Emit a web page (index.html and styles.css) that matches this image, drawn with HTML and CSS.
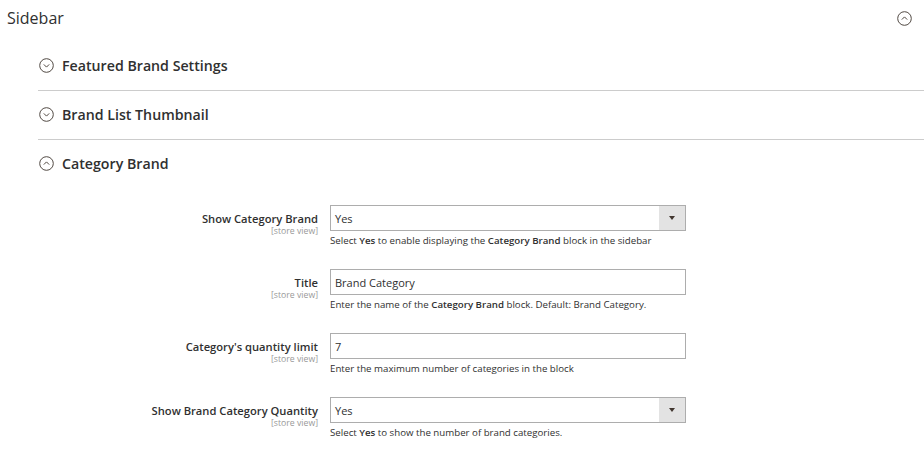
FILE: index.html
```html
<!DOCTYPE html>
<html>
<head>
<meta charset="utf-8">
<link rel="stylesheet" href="styles.css">
</head>
<body>
<div class="page">
  <div class="main-head">
    <span class="main-title">Sidebar</span>
    <svg class="ico ico-main" width="15" height="15" viewBox="0 0 15 15"><circle cx="7.5" cy="7.5" r="6.8" fill="none" stroke="#514943" stroke-width="1"/><path d="M4.8 8.6 L7.5 5.9 L10.2 8.6" fill="none" stroke="#514943" stroke-width="1"/></svg>
  </div>
  <div class="groups">
    <div class="group">
      <div class="group-head">
        <svg class="ico" width="15" height="15" viewBox="0 0 15 15"><circle cx="7.5" cy="7.5" r="6.8" fill="none" stroke="#514943" stroke-width="1"/><path d="M4.8 6.4 L7.5 9.1 L10.2 6.4" fill="none" stroke="#514943" stroke-width="1"/></svg>
        <span class="group-title">Featured Brand Settings</span>
      </div>
    </div>
    <div class="group">
      <div class="group-head">
        <svg class="ico" width="15" height="15" viewBox="0 0 15 15"><circle cx="7.5" cy="7.5" r="6.8" fill="none" stroke="#514943" stroke-width="1"/><path d="M4.8 6.4 L7.5 9.1 L10.2 6.4" fill="none" stroke="#514943" stroke-width="1"/></svg>
        <span class="group-title">Brand List Thumbnail</span>
      </div>
    </div>
    <div class="group open">
      <div class="group-head">
        <svg class="ico" width="15" height="15" viewBox="0 0 15 15"><circle cx="7.5" cy="7.5" r="6.8" fill="none" stroke="#514943" stroke-width="1"/><path d="M4.8 8.6 L7.5 5.9 L10.2 8.6" fill="none" stroke="#514943" stroke-width="1"/></svg>
        <span class="group-title">Category Brand</span>
      </div>
      <div class="fields">
        <div class="row">
          <div class="label"><span class="lbl">Show Category Brand</span><span class="scope">[store view]</span></div>
          <div class="control">
            <div class="select"><span>Yes</span><span class="arrow"></span></div>
            <div class="note">Select <b>Yes</b> to enable displaying the <b>Category Brand</b> block in the sidebar</div>
          </div>
        </div>
        <div class="row">
          <div class="label"><span class="lbl">Title</span><span class="scope">[store view]</span></div>
          <div class="control">
            <div class="input">Brand Category</div>
            <div class="note">Enter the name of the <b>Category Brand</b> block. Default: Brand Category.</div>
          </div>
        </div>
        <div class="row">
          <div class="label"><span class="lbl">Category's quantity limit</span><span class="scope">[store view]</span></div>
          <div class="control">
            <div class="input">7</div>
            <div class="note">Enter the maximum number of categories in the block</div>
          </div>
        </div>
        <div class="row">
          <div class="label"><span class="lbl">Show Brand Category Quantity</span><span class="scope">[store view]</span></div>
          <div class="control">
            <div class="select"><span>Yes</span><span class="arrow"></span></div>
            <div class="note">Select <b>Yes</b> to show the number of brand categories.</div>
          </div>
        </div>
      </div>
    </div>
  </div>
</div>
</body>
</html>
```
FILE: styles.css
```css
* { box-sizing: border-box; }
html, body { margin: 0; padding: 0; background: #fff; }
body {
  font-family: "Open Sans", "Liberation Sans", sans-serif;
  color: #303030;
}
.page { width: 924px; }
.main-head {
  display: flex;
  align-items: center;
  justify-content: space-between;
  height: 36px;
  padding: 0 12px 0 7px;
}
.main-title { font-size: 16px; font-weight: 400; color: #303030; }
.ico { display: block; flex: none; }
.groups { padding-left: 38px; padding-top: 6px; }
.group { border-bottom: 1px solid #cccccc; }
.group.open { border-bottom: none; }
.group-head {
  display: flex;
  align-items: center;
  gap: 8px;
  height: 48px;
  padding-left: 1px;
  padding-bottom: 2px;
}
.group-title { font-size: 14.2px; font-weight: 600; color: #303030; }
.fields { padding-top: 17px; }
.row {
  display: flex;
  gap: 12px;
  height: 64px;
}
.label {
  width: 280px;
  display: flex;
  flex-direction: column;
  align-items: flex-end;
  padding-top: 8px;
}
.lbl { font-size: 11.2px; font-weight: 600; line-height: 12px; color: #303030; }
.scope { font-size: 8.7px; line-height: 10px; color: #999999; margin-top: 1px; }
.control { width: 356px; }
.input, .select {
  height: 26px;
  border: 1px solid #adadad;
  font-size: 11px;
  line-height: 25px;
  padding-left: 4px;
  color: #303030;
  background: #fff;
}
.select { display: flex; justify-content: space-between; padding-right: 0; }
.arrow {
  width: 26px;
  height: 24px;
  background: #e3e3e3;
  position: relative;
}
.arrow::after {
  content: "";
  position: absolute;
  left: 10px;
  top: 10px;
  border-left: 3px solid transparent;
  border-right: 3px solid transparent;
  border-top: 4px solid #41362f;
}
.note { font-size: 9.7px; line-height: 14px; padding-top: 3px; color: #303030; }
.note b { font-weight: 600; }
```
